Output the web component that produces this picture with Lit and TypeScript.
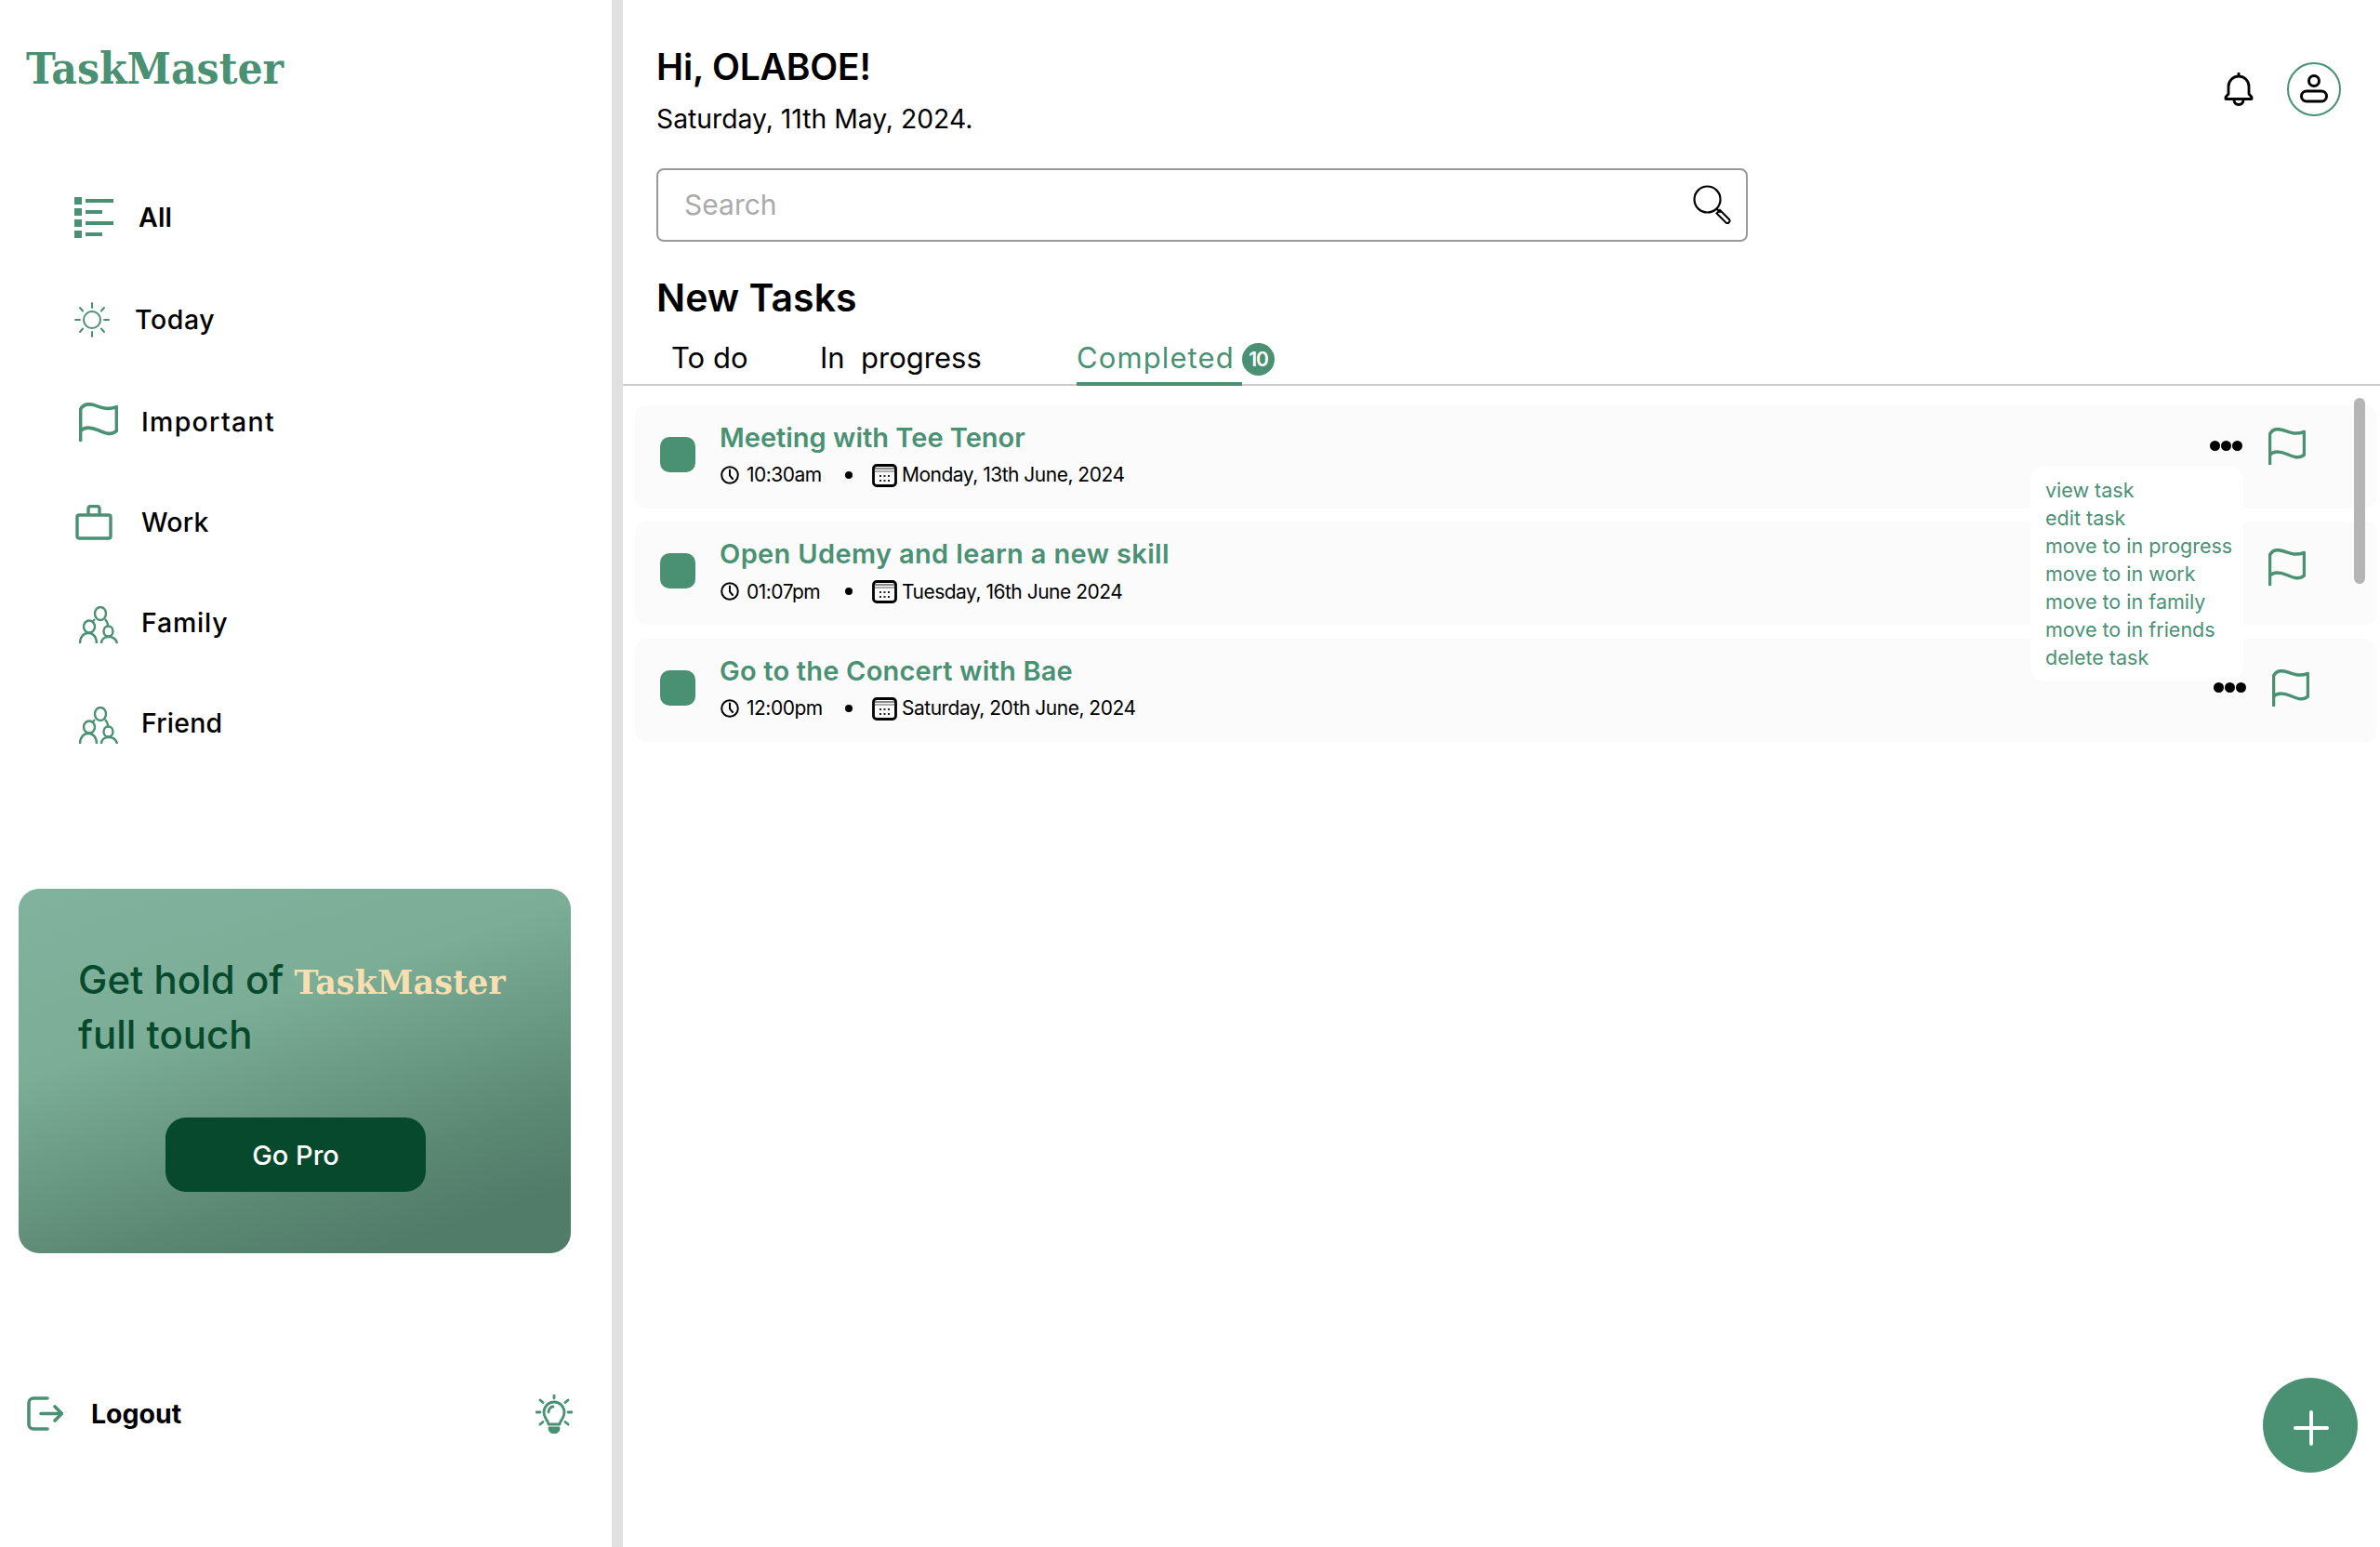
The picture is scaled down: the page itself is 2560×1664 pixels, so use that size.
import { LitElement, html, css } from "lit";
import { customElement } from "lit/decorators.js";

const flag = (size = 40) => html`<svg width=${size} height=${size} viewBox="0 0 40 40" fill="none" stroke="#4a9174" stroke-width="3.500" stroke-linecap="round" stroke-linejoin="round"><path d="M1.500 39V7C4 2 9 1 14 2.200 21 4 27 8.500 38.500 4.500V29C33 34 27 31.500 20 28.500 13 25.500 6 24.500 1.500 29"/></svg>`;
const people = html`<svg class="low" width="42" height="40" viewBox="0 0 42 40" fill="none" stroke="#4a9174" stroke-width="2.400"><ellipse cx="23" cy="8" rx="6" ry="7"/><ellipse cx="11" cy="22" rx="6" ry="6.500"/><ellipse cx="31.500" cy="27" rx="5" ry="5.500"/><path d="M1 40c0-7 4-11 9-11s9 4 9 11"/><path d="M24 40c0-4 3-7 8-7s8 3 9 7"/><path d="M17 14c-1 1-2 2-2 3M28 14c2 2 3 4 3 7"/></svg>`;
const icons: Record<string, unknown> = {
  all: html`<svg width="42" height="44" viewBox="0 0 42 44" fill="#4a9174"><rect width="8" height="8"/><rect y="12" width="8" height="8"/><rect y="24" width="8" height="8"/><rect y="36" width="8" height="8"/><rect x="12" y="2" width="30" height="4"/><rect x="12" y="14" width="18" height="4"/><rect x="12" y="26" width="30" height="4"/><rect x="12" y="38" width="18" height="4"/></svg>`,
  today: html`<svg width="38" height="38" viewBox="0 0 38 38" fill="none" stroke="#4a9174" stroke-width="2" stroke-linecap="round"><circle cx="19" cy="19" r="9"/><path d="M19 1v5M19 32v5M1 19h5M32 19h5M6 6l3 3.500M32 6l-3 3.500M6 32l3-3.500M32 32l-3-3.500"/></svg>`,
  important: flag(42),
  work: html`<svg width="40" height="38" viewBox="0 0 40 38" fill="none" stroke="#4a9174" stroke-width="3.400" stroke-linejoin="round"><rect x="2" y="11" width="36" height="25" rx="2"/><path d="M14 11V4a2.500 2.500 0 0 1 2.500-2.500h7A2.500 2.500 0 0 1 26 4v7"/></svg>`,
  family: people,
  friend: people,
};
const clock = html`<svg class="clock" width="20" height="20" viewBox="0 0 20 20" fill="none" stroke="#000" stroke-width="2" stroke-linecap="round"><circle cx="10" cy="10" r="8.800"/><path d="M10 4.500V10.500l3 3.500"/></svg>`;
const calendar = html`<svg class="cal" width="27" height="26" viewBox="0 0 27 26" fill="none"><rect x="1.500" y="2.500" width="24" height="22" rx="3.500" stroke="#000" stroke-width="2.800"/><rect x="3" y="5" width="21" height="2" fill="#888"/><rect x="3" y="8" width="21" height="2" fill="#aaa"/><path d="M7 1v2M20 1v2" stroke="#000" stroke-width="2"/><g fill="#222"><rect x="8" y="13" width="2" height="2"/><rect x="12.500" y="13" width="2" height="2"/><rect x="17" y="13" width="2" height="2"/><rect x="8" y="18" width="2" height="2"/><rect x="12.500" y="18" width="2" height="2"/><rect x="17" y="18" width="2" height="2"/></g></svg>`;

const nav = [
  { key: "all", label: "All", h: 109, slot: 69, pad: 0, sp: 0.2, bold: true },
  { key: "today", label: "Today", h: 111, slot: 65, pad: 0, sp: 0.6, bold: false },
  { key: "important", label: "Important", h: 109, slot: 72, pad: 5, sp: 1.3, bold: false },
  { key: "work", label: "Work", h: 107, slot: 72, pad: 1, sp: 0.2, bold: false },
  { key: "family", label: "Family", h: 108, slot: 72, pad: 5, sp: 0.8, bold: false },
  { key: "friend", label: "Friend", h: 108, slot: 72, pad: 5, sp: 0.2, bold: false },
];
const tasks = [
  { title: "Meeting with Tee Tenor", sp: 0, time: "10:30am", date: "Monday, 13th June, 2024", top: 24, right: 76, menu: true },
  { title: "Open Udemy and learn a new skill", sp: 0.35, time: "01:07pm", date: "Tuesday, 16th June 2024", top: 29, right: 76, menu: false },
  { title: "Go to the Concert with Bae", sp: 0.2, time: "12:00pm", date: "Saturday, 20th June, 2024", top: 33, right: 72, menu: false },
];
const menu = ["view task", "edit task", "move to in progress", "move to in work", "move to in family", "move to in friends", "delete task"];

@customElement("app-root")
export class AppRoot extends LitElement {
  static styles = css`
    :host { display: block; font-family: Inter, "Noto Sans", sans-serif; color: #000; }
    * { box-sizing: border-box; }
    .page { display: flex; width: 2560px; height: 1664px; overflow: hidden; background: #fff; }
    aside { width: 670px; flex: none; border-right: 12px solid #e0e0e0; display: flex; flex-direction: column; padding-top: 43px; }
    .logo { margin: 0 0 76px 28px; font: 700 47.500px/60px "DejaVu Serif Condensed", "DejaVu Serif", serif; color: #4a9174; white-space: nowrap; }
    .nav-item { display: flex; align-items: center; padding-left: 80px; font-size: 28.500px; font-weight: 500; }
    .nav-item.bold { font-weight: 600; }
    .slot { flex: none; display: flex; }
    .slot svg.low { margin-top: 6px; }
    .card { margin: 125px 0 0 20px; width: 594px; height: 392px; border-radius: 22px; padding: 68px 0 0 64px; background: linear-gradient(162deg, #80b29d 0%, #7bad97 35%, #5b8873 72%, #507c69 88%); }
    .pitch { font-size: 42px; line-height: 59px; color: #07492d; white-space: nowrap; font-weight: 500; }
    .pitch b { font: 700 35px/1 "DejaVu Serif", serif; color: #f8dfb0; }
    .pro { margin: 60px 0 0 94px; width: 280px; height: 80px; border-radius: 22px; background: #07492d; color: #fff; font-size: 29px; font-weight: 500; display: flex; align-items: center; justify-content: center; }
    .logout { margin-top: 147.500px; height: 50px; display: flex; align-items: center; padding: 0 42px 0 29px; font-size: 28.500px; font-weight: 700; }
    .logout span { margin-left: 30px; flex: 1; }

    main { flex: 1; position: relative; padding-top: 46.500px; }
    .head { display: flex; justify-content: space-between; align-items: flex-start; padding: 0 42px 0 36px; }
    h1 { margin: 0; font-size: 39px; line-height: 50px; font-weight: 600; letter-spacing: -0.2px; }
    .date { margin-top: 11px; font-size: 28.300px; line-height: 40px; }
    .top-icons { display: flex; align-items: center; gap: 36px; margin-top: 20px; }
    .avatar { width: 58px; height: 58px; border: 2.500px solid #4a9174; border-radius: 50%; display: flex; align-items: center; justify-content: center; }
    .search { margin: 33.500px 0 0 36px; width: 1174px; height: 79px; border: 2.500px solid #999; border-radius: 8px; display: flex; align-items: center; justify-content: space-between; padding: 0 15px 2px 28px; font-size: 30px; color: #aaa; }
    h2 { margin: 35px 0 0 36px; font-size: 41px; line-height: 50px; font-weight: 600; }
    .tabs { margin-top: 17.500px; display: flex; align-items: flex-end; border-bottom: 2px solid #ccc; height: 52px; padding-left: 52px; font-size: 31px; line-height: 40px; }
    .tab { margin-bottom: -2px; padding-bottom: 6px; border-bottom: 4px solid transparent; white-space: pre; }
    .t1 { width: 160px; }
    .t2 { width: 276px; }
    .t3 { width: 178px; color: #4a9174; border-bottom-color: #4a9174; letter-spacing: 1.100px; }
    .badge { width: 35px; height: 35px; border-radius: 50%; background: #4a9174; color: #fff; font-size: 21px; letter-spacing: -1px; font-weight: 600; line-height: 35px; text-align: center; margin: 0 0 9px 0; }
    .list { padding: 21px 4px 0 13px; display: flex; flex-direction: column; gap: 14.500px; }
    .row { position: relative; height: 111px; background: #fbfbfb; border-radius: 12px; display: flex; padding-left: 27px; }
    .check { flex: none; width: 38px; height: 38px; margin: 34px 26px 0 0; background: #4a9174; border-radius: 10px; }
    .body { padding-top: 15px; flex: 1; }
    .title { font-size: 29px; line-height: 40px; font-weight: 600; color: #4a9174; white-space: nowrap; }
    .meta { margin-top: 5px; display: flex; align-items: center; height: 30px; font-size: 21px; letter-spacing: -0.5px; white-space: nowrap; }
    .clock { margin: 0 8px 0 1px; }
    .time { width: 106px; }
    .dot { width: 8px; height: 8px; border-radius: 50%; background: #000; margin-right: 21px; }
    .cal { margin-right: 5px; }
    .actions { display: flex; align-items: center; gap: 28px; height: 40px; }
    .dots { display: flex; gap: 1px; }
    .dots i { width: 11px; height: 11px; border-radius: 50%; background: #000; display: block; }
    .menu { position: absolute; z-index: 5; top: 65px; right: 143px; width: 229px; height: 232px; background: #fff; border-radius: 16px; padding: 11px 0 0 16px; font-size: 21.500px; line-height: 30px; color: #4a9174; white-space: nowrap; }
    .scroll { position: absolute; left: 1862px; top: 428px; width: 12px; height: 200px; border-radius: 6px; background: #b5b5b5; }
    .fab { position: absolute; left: 1764px; top: 1482px; width: 102px; height: 102px; border-radius: 50%; background: #4a9174; display: flex; align-items: center; justify-content: center; padding: 5px 0 0 2px; }
  `;

  render() {
    return html`<div class="page">
      <aside>
        <div class="logo">TaskMaster</div>
        ${nav.map((n) => html`<div class="nav-item ${n.bold ? "bold" : ""}" style="height:${n.h}px;letter-spacing:${n.sp}px">
          <div class="slot" style="width:${n.slot}px;padding-left:${n.pad}px">${icons[n.key]}</div>${n.label}</div>`)}
        <section class="card">
          <div class="pitch">Get hold of <b>TaskMaster</b><br />full touch</div>
          <div class="pro">Go Pro</div>
        </section>
        <div class="logout">
          <svg width="39" height="37" viewBox="0 0 39 37" fill="none" stroke="#4a9174" stroke-width="3.600" stroke-linecap="round" stroke-linejoin="round"><path d="M22 2H7a5 5 0 0 0-5 5v23a5 5 0 0 0 5 5h15"/><path d="M15 18.500h22M30 11l7.500 7.500L30 26"/></svg>
          <span>Logout</span>
          <svg width="40" height="42" viewBox="0 0 40 42" fill="none" stroke="#4a9174" stroke-width="2.800" stroke-linecap="round" stroke-linejoin="round"><path d="M20 1v3M5 6l3 2.500M35 6l-3 2.500M1 19h4M35 19h4M5 32l3-2.500M35 32l-3-2.500"/><path d="M14 32c0-4-5-6-5-13a11 11 0 0 1 22 0c0 7-5 9-5 13z"/><path d="M15 36c0 3 2 5 5 5s5-2 5-5z" fill="#4a9174"/><path d="M14 19c0-3 2-6 5-6"/></svg>
        </div>
      </aside>
      <main>
        <div class="head">
          <div>
            <h1>Hi, OLABOE!</h1>
            <div class="date">Saturday, 11th May, 2024.</div>
          </div>
          <div class="top-icons">
            <svg width="32" height="36" viewBox="0 0 32 36" fill="none" stroke="#000" stroke-width="2.800" stroke-linecap="round" stroke-linejoin="round"><path d="M16 1v3M2 26.500l3-3.500V15a11 11 0 0 1 22 0v8l3 3.500v2H2z"/><path d="M11 29c0 3.500 2 5.500 5 5.500s5-2 5-5.500"/></svg>
            <div class="avatar"><svg width="30" height="32" viewBox="0 0 30 32" fill="none" stroke="#000" stroke-width="3"><circle cx="15" cy="7" r="5.500"/><rect x="1.500" y="18" width="27" height="11" rx="5.500"/></svg></div>
          </div>
        </div>
        <div class="search">Search
          <svg width="42" height="42" viewBox="0 0 42 42" fill="none" stroke="#000" stroke-width="2.200" stroke-linecap="round"><circle cx="15.500" cy="15.500" r="14"/><path d="M26 26l3 3"/><path d="M29 27l10 10a2.500 2.500 0 0 1-3.500 3.500l-10-10z" stroke-width="2"/></svg>
        </div>
        <h2>New Tasks</h2>
        <div class="tabs">
          <div class="tab t1">To do</div>
          <div class="tab t2">In  progress</div>
          <div class="tab t3">Completed</div>
          <div class="badge">10</div>
        </div>
        <div class="list">
          ${tasks.map((t) => html`<div class="row" style="padding-right:${t.right}px">
            <div class="check"></div>
            <div class="body">
              <div class="title" style="letter-spacing:${t.sp}px">${t.title}</div>
              <div class="meta">${clock}<span class="time">${t.time}</span><span class="dot"></span>${calendar}<span>${t.date}</span></div>
            </div>
            <div class="actions" style="margin-top:${t.top}px"><div class="dots"><i></i><i></i><i></i></div>${flag()}</div>
            ${t.menu ? html`<div class="menu">${menu.map((m) => html`<div>${m}</div>`)}</div>` : ""}
          </div>`)}
        </div>
        <div class="scroll"></div>
        <div class="fab"><svg width="38" height="38" viewBox="0 0 40 40" stroke="#fff" stroke-width="4" stroke-linecap="round"><path d="M20 2v36M2 20h36"/></svg></div>
      </main>
    </div>`;
  }
}
